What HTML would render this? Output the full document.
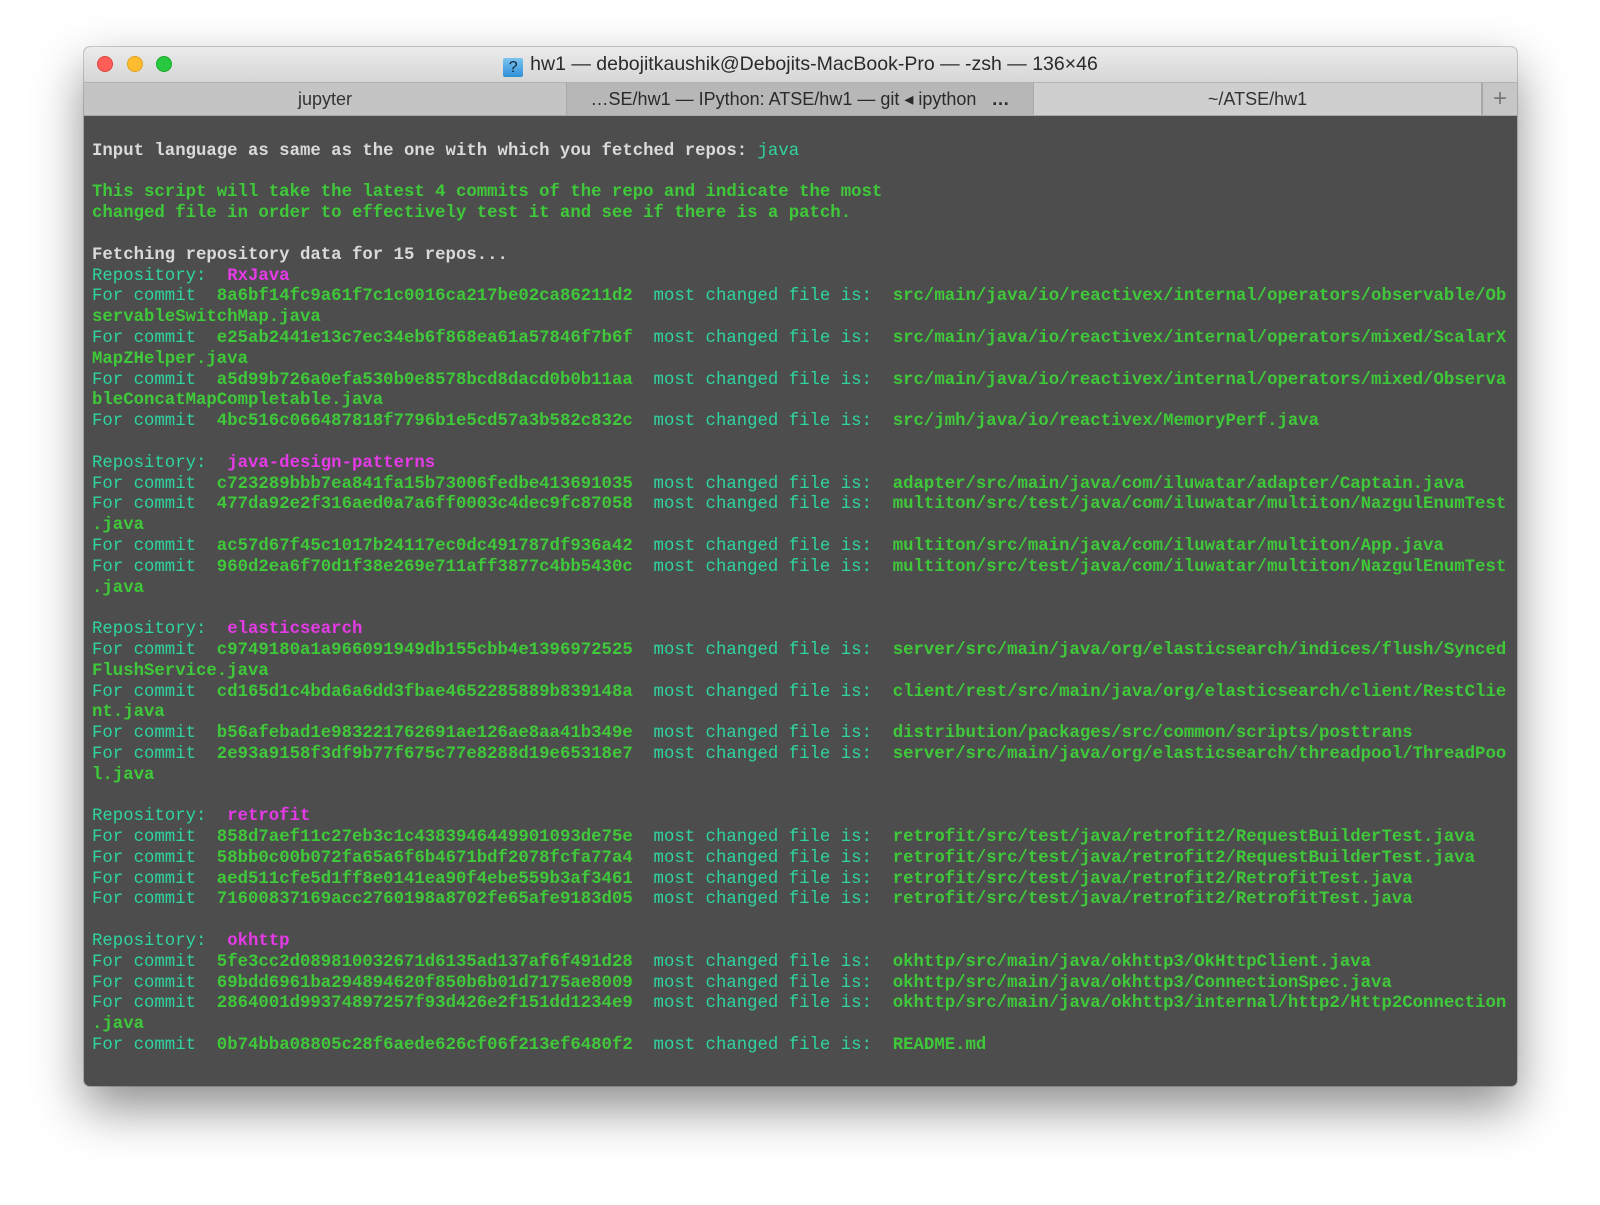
<!DOCTYPE html>
<html><head><meta charset="utf-8"><style>
html,body{margin:0;padding:0;background:#fff;width:1600px;height:1205px;overflow:hidden}
.win{position:absolute;left:84px;top:47px;width:1433px;height:1039px;border-radius:6px;background:#4d4d4d;box-shadow:0 22px 50px rgba(0,0,0,.45),0 0 0 1px rgba(0,0,0,.18);overflow:hidden}
.title{position:absolute;left:0;top:0;width:100%;height:35px;background:linear-gradient(#ebebeb,#d6d6d6);font:19.5px "Liberation Sans",sans-serif;line-height:35px;color:#2a2a2a;text-align:center}
.dot{position:absolute;top:9px;width:14px;height:14px;border-radius:50%}
.tabs{position:absolute;left:0;top:35px;width:100%;height:34px;background:#c6c6c6;border-top:1px solid #b3b3b3;border-bottom:1px solid #a9a9a9;box-sizing:border-box}
.tab{position:absolute;top:0;height:32px;font:18px "Liberation Sans",sans-serif;line-height:33px;text-align:center;color:#333;border-right:1px solid #a8a8a8;box-sizing:border-box}
.term{position:absolute;left:8px;top:74px;font:bold 17.33px/20.8px "Liberation Mono",monospace;color:#dadada;white-space:pre}
.t{color:#2fd4a0;font-weight:normal}
.g{color:#3fc93a}
.m{color:#e43be6}
</style></head><body>
<div class="win">
<div class="title">
<div class="dot" style="left:13px;background:#fd5e57;border:0.5px solid #e0443e"></div>
<div class="dot" style="left:43px;background:#febc2e;border:0.5px solid #dea123"></div>
<div class="dot" style="left:72px;background:#28c840;border:0.5px solid #1aab29"></div>
<span style="display:inline-block;width:20px;height:19px;background:linear-gradient(#7cc4f2,#2f8fd6);border-radius:2px;vertical-align:-2px;color:#123;font-size:16px;line-height:19px;margin-right:7px">?</span>hw1 — debojitkaushik@Debojits-MacBook-Pro — -zsh — 136×46</div>
<div class="tabs">
<div class="tab" style="left:0;width:483px;background:#c4c4c4">jupyter</div>
<div class="tab" style="left:483px;width:467px;background:#b7b7b7;color:#2a2a2a">…SE/hw1 — IPython: ATSE/hw1 — git ◂ ipython &nbsp; <b>…</b></div>
<div class="tab" style="left:950px;width:448px;background:#cfcfcf">~/ATSE/hw1</div>
<div class="tab" style="left:1398px;width:35px;background:#c6c6c6;border-right:0;border-left:1px solid #a8a8a8;font-size:24px;line-height:32px;color:#777">+</div>
</div>
<div class="term">
Input language as same as the one with which you fetched repos: <span class="t">java</span>

<span class="g">This script will take the latest 4 commits of the repo and indicate the most
changed file in order to effectively test it and see if there is a patch.</span>

Fetching repository data for 15 repos...
<span class="t">Repository:  </span><span class="m">RxJava</span>
<span class="t">For commit  </span><span class="g">8a6bf14fc9a61f7c1c0016ca217be02ca86211d2</span><span class="t">  most changed file is:  </span><span class="g">src/main/java/io/reactivex/internal/operators/observable/Ob
servableSwitchMap.java</span>
<span class="t">For commit  </span><span class="g">e25ab2441e13c7ec34eb6f868ea61a57846f7b6f</span><span class="t">  most changed file is:  </span><span class="g">src/main/java/io/reactivex/internal/operators/mixed/ScalarX
MapZHelper.java</span>
<span class="t">For commit  </span><span class="g">a5d99b726a0efa530b0e8578bcd8dacd0b0b11aa</span><span class="t">  most changed file is:  </span><span class="g">src/main/java/io/reactivex/internal/operators/mixed/Observa
bleConcatMapCompletable.java</span>
<span class="t">For commit  </span><span class="g">4bc516c066487818f7796b1e5cd57a3b582c832c</span><span class="t">  most changed file is:  </span><span class="g">src/jmh/java/io/reactivex/MemoryPerf.java</span>

<span class="t">Repository:  </span><span class="m">java-design-patterns</span>
<span class="t">For commit  </span><span class="g">c723289bbb7ea841fa15b73006fedbe413691035</span><span class="t">  most changed file is:  </span><span class="g">adapter/src/main/java/com/iluwatar/adapter/Captain.java</span>
<span class="t">For commit  </span><span class="g">477da92e2f316aed0a7a6ff0003c4dec9fc87058</span><span class="t">  most changed file is:  </span><span class="g">multiton/src/test/java/com/iluwatar/multiton/NazgulEnumTest
.java</span>
<span class="t">For commit  </span><span class="g">ac57d67f45c1017b24117ec0dc491787df936a42</span><span class="t">  most changed file is:  </span><span class="g">multiton/src/main/java/com/iluwatar/multiton/App.java</span>
<span class="t">For commit  </span><span class="g">960d2ea6f70d1f38e269e711aff3877c4bb5430c</span><span class="t">  most changed file is:  </span><span class="g">multiton/src/test/java/com/iluwatar/multiton/NazgulEnumTest
.java</span>

<span class="t">Repository:  </span><span class="m">elasticsearch</span>
<span class="t">For commit  </span><span class="g">c9749180a1a966091949db155cbb4e1396972525</span><span class="t">  most changed file is:  </span><span class="g">server/src/main/java/org/elasticsearch/indices/flush/Synced
FlushService.java</span>
<span class="t">For commit  </span><span class="g">cd165d1c4bda6a6dd3fbae4652285889b839148a</span><span class="t">  most changed file is:  </span><span class="g">client/rest/src/main/java/org/elasticsearch/client/RestClie
nt.java</span>
<span class="t">For commit  </span><span class="g">b56afebad1e983221762691ae126ae8aa41b349e</span><span class="t">  most changed file is:  </span><span class="g">distribution/packages/src/common/scripts/posttrans</span>
<span class="t">For commit  </span><span class="g">2e93a9158f3df9b77f675c77e8288d19e65318e7</span><span class="t">  most changed file is:  </span><span class="g">server/src/main/java/org/elasticsearch/threadpool/ThreadPoo
l.java</span>

<span class="t">Repository:  </span><span class="m">retrofit</span>
<span class="t">For commit  </span><span class="g">858d7aef11c27eb3c1c4383946449901093de75e</span><span class="t">  most changed file is:  </span><span class="g">retrofit/src/test/java/retrofit2/RequestBuilderTest.java</span>
<span class="t">For commit  </span><span class="g">58bb0c00b072fa65a6f6b4671bdf2078fcfa77a4</span><span class="t">  most changed file is:  </span><span class="g">retrofit/src/test/java/retrofit2/RequestBuilderTest.java</span>
<span class="t">For commit  </span><span class="g">aed511cfe5d1ff8e0141ea90f4ebe559b3af3461</span><span class="t">  most changed file is:  </span><span class="g">retrofit/src/test/java/retrofit2/RetrofitTest.java</span>
<span class="t">For commit  </span><span class="g">71600837169acc2760198a8702fe65afe9183d05</span><span class="t">  most changed file is:  </span><span class="g">retrofit/src/test/java/retrofit2/RetrofitTest.java</span>

<span class="t">Repository:  </span><span class="m">okhttp</span>
<span class="t">For commit  </span><span class="g">5fe3cc2d089810032671d6135ad137af6f491d28</span><span class="t">  most changed file is:  </span><span class="g">okhttp/src/main/java/okhttp3/OkHttpClient.java</span>
<span class="t">For commit  </span><span class="g">69bdd6961ba294894620f850b6b01d7175ae8009</span><span class="t">  most changed file is:  </span><span class="g">okhttp/src/main/java/okhttp3/ConnectionSpec.java</span>
<span class="t">For commit  </span><span class="g">2864001d99374897257f93d426e2f151dd1234e9</span><span class="t">  most changed file is:  </span><span class="g">okhttp/src/main/java/okhttp3/internal/http2/Http2Connection
.java</span>
<span class="t">For commit  </span><span class="g">0b74bba08805c28f6aede626cf06f213ef6480f2</span><span class="t">  most changed file is:  </span><span class="g">README.md</span>
</div>
</div>
</body></html>
